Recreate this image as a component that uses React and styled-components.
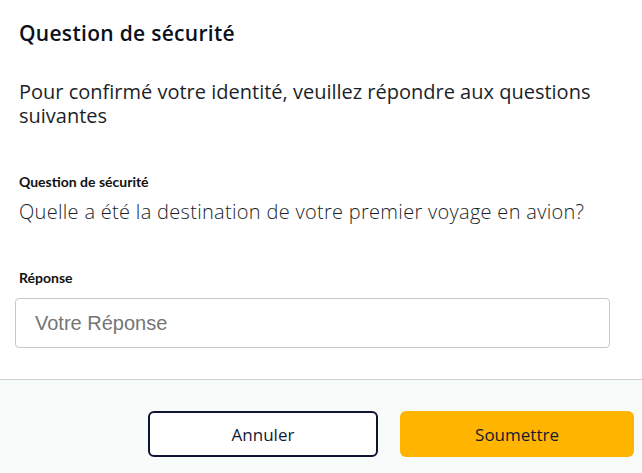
import styled, { createGlobalStyle } from "styled-components";

const GlobalStyle = createGlobalStyle`
  body {
    margin: 0;
    background: #ffffff;
    font-family: Lato, "Open Sans", sans-serif;
    color: #111827;
  }
`;

const Modal = styled.div`
  width: 642px;
  height: 473px;
  display: flex;
  flex-direction: column;
  background: #fff;
`;

const Body = styled.div`
  padding: 20px 19px 0 19px;
  display: flex;
  flex-direction: column;
  height: 379px;
  box-sizing: border-box;
  flex-shrink: 0;
`;

const Title = styled.h2`
  margin: 0;
  font-family: "Open Sans", Lato, sans-serif;
  font-size: 21px;
  font-weight: 600;
  line-height: 26px;
  color: #0b1020;
  letter-spacing: 0.3px;
`;

const Intro = styled.p`
  margin: 34px 0 0 0;
  font-family: "Open Sans", Lato, sans-serif;
  font-size: 20px;
  font-weight: 400;
  line-height: 24px;
  color: #1b1f2a;
`;

const Label = styled.div`
  margin-top: ${(p) => p.top || 0}px;
  font-size: 14px;
  font-weight: 700;
  line-height: 18px;
  color: #111;
`;

const QuestionText = styled.div`
  margin-top: 9px;
  font-family: "Open Sans", Lato, sans-serif;
  font-size: 20px;
  font-weight: 300;
  line-height: 24px;
  letter-spacing: 0.3px;
  color: #1b1f2a;
`;

const Input = styled.input`
  margin-top: 11px;
  margin-left: -4px;
  width: 595px;
  height: 50px;
  box-sizing: border-box;
  border: 1px solid #c8c8c8;
  border-radius: 4px;
  padding: 0 19px;
  font-family: "Liberation Sans", Arial, sans-serif;
  font-size: 20px;
  color: #333;
  outline: none;
  &::placeholder {
    color: #757575;
  }
`;

const Footer = styled.div`
  flex: 1;
  border-top: 1px solid #cfd2d2;
  background: #f7fbfa;
  display: flex;
  justify-content: flex-end;
  align-items: flex-start;
  gap: 22px;
  padding: 31px 8px 0 0;
`;

const Button = styled.button`
  height: 46px;
  box-sizing: border-box;
  border-radius: 6px;
  font-family: "Open Sans", Lato, sans-serif;
  font-size: 17px;
  font-weight: 400;
  color: #141a33;
  cursor: pointer;
  border: ${(p) => (p.primary ? "none" : "2px solid #0f1531")};
  background: ${(p) => (p.primary ? "#ffb400" : "#ffffff")};
  width: ${(p) => (p.primary ? 234 : 230)}px;
`;

export default function App() {
  return (
    <>
      <GlobalStyle />
      <Modal>
        <Body>
          <Title>Question de sécurité</Title>
          <Intro>
            Pour confirmé votre identité, veuillez répondre aux questions
            suivantes
          </Intro>
          <Label top={45}>Question de sécurité</Label>
          <QuestionText>
            Quelle a été la destination de votre premier voyage en avion?
          </QuestionText>
          <Label top={45}>Réponse</Label>
          <Input placeholder="Votre Réponse" />
        </Body>
        <Footer>
          <Button>Annuler</Button>
          <Button primary>Soumettre</Button>
        </Footer>
      </Modal>
    </>
  );
}
